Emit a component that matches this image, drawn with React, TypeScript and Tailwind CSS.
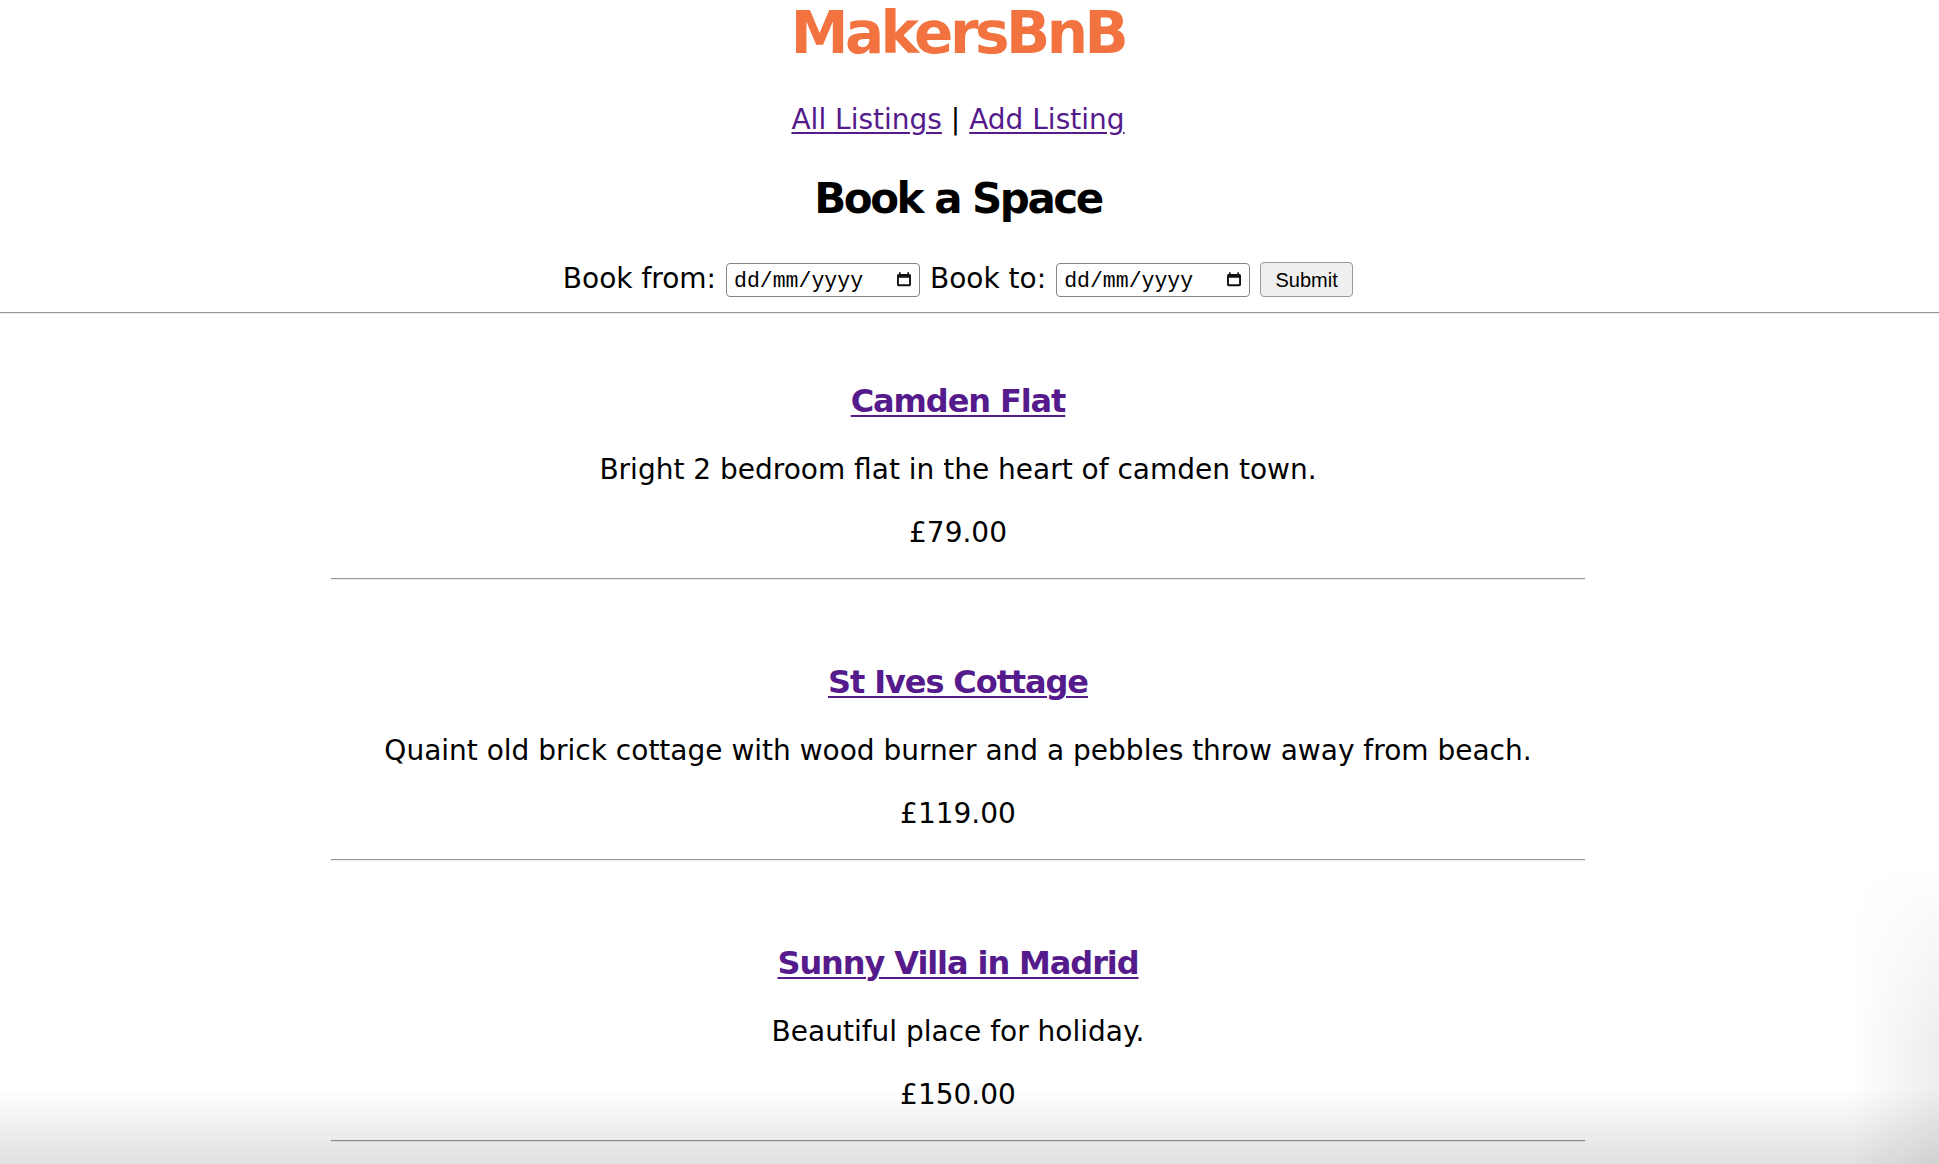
import React from "react"

const listings = [
  { name: "Camden Flat", description: "Bright 2 bedroom flat in the heart of camden town.", price: "£79.00" },
  { name: "St Ives Cottage", description: "Quaint old brick cottage with wood burner and a pebbles throw away from beach.", price: "£119.00" },
  { name: "Sunny Villa in Madrid", description: "Beautiful place for holiday.", price: "£150.00" },
]

function CalendarIcon() {
  return (
    <svg width="16" height="16" viewBox="0 0 16 16" className="shrink-0 -mt-[2px]">
      <path
        fillRule="evenodd"
        fill="#111"
        d="M3 1.2h1.6V3h6.8V1.2H13V3h.4A1.6 1.6 0 0 1 15 4.6v9A1.6 1.6 0 0 1 13.4 15.2H2.6A1.6 1.6 0 0 1 1 13.6v-9A1.6 1.6 0 0 1 2.6 3H3V1.2zM2.9 6.8v6.5h10.2V6.8H2.9z"
      />
    </svg>
  )
}

function DateField() {
  return (
    <div className="mt-px flex h-[34px] w-[194px] items-center justify-between rounded-[4px] border border-[#858585] bg-white pl-[7px] pr-[7px]">
      <span className="pt-[4px] font-['Liberation_Mono','Courier_New',monospace] text-[21.5px] leading-none text-black">dd/mm/yyyy</span>
      <CalendarIcon />
    </div>
  )
}

export default function App() {
  return (
    <div className="relative min-h-screen bg-white font-['DejaVu_Sans',sans-serif] text-black">
      {/* Header */}
      <header className="pr-[23px] text-center">
        <h1 className="mt-[4px] text-[58px] leading-[58px] font-bold tracking-[-3.5px] text-[#f27240]">MakersBnB</h1>
        <nav className="mt-[42px] text-[28px] leading-[32px]">
          <a href="#" className="text-[#551a8b] underline underline-offset-[3px]">All Listings</a>
          {" | "}
          <a href="#" className="text-[#551a8b] underline underline-offset-[3px]">Add Listing</a>
        </nav>
        <h2 className="mt-[39px] text-[42px] leading-[48px] font-bold tracking-[-2.5px]">Book a Space</h2>
        <form className="mt-[39px] flex h-[35px] items-start justify-center gap-[10px]" onSubmit={(e) => e.preventDefault()}>
          <label className="text-[28px] leading-[33px]">Book from:</label>
          <DateField />
          <label className="text-[28px] leading-[33px]">Book to:</label>
          <DateField />
          <button
            type="submit"
            className="h-[35px] w-[93px] rounded-[4px] border border-[#9a9a9a] bg-[#efefef] font-['Liberation_Sans',Arial,sans-serif] text-[20px] text-black"
          >
            Submit
          </button>
        </form>
      </header>

      <hr className="mt-[15px] border-t border-b border-t-[#979797] border-b-[#ececec]" />

      {/* Listings */}
      <main className="flex flex-col items-center gap-[83px] pt-[68px] pr-[23px] text-center">
        {listings.map((l) => (
          <article key={l.name} className="flex w-[1254px] flex-col items-center">
            <a href="#" className="text-[32px] leading-[38px] font-bold tracking-[-1.1px] text-[#551a8b] underline decoration-[2px] underline-offset-[3px]">
              {l.name}
            </a>
            <p className="mt-[34px] text-[28px] leading-[32px]">{l.description}</p>
            <p className="mt-[31px] text-[28px] leading-[32px]">{l.price}</p>
            <hr className="mt-[29px] w-full border-t border-b border-t-[#979797] border-b-[#ececec]" />
          </article>
        ))}
      </main>

      {/* window shadow over the bottom edge */}
      <div className="pointer-events-none fixed inset-x-0 bottom-0 h-[75px] bg-linear-to-b from-white/0 to-black/[0.12]" />
      <div className="pointer-events-none fixed right-0 bottom-0 h-[300px] w-[90px] bg-linear-to-r from-white/0 to-black/[0.07] [mask-image:linear-gradient(to_bottom,transparent,black_60%)]" />
    </div>
  )
}
